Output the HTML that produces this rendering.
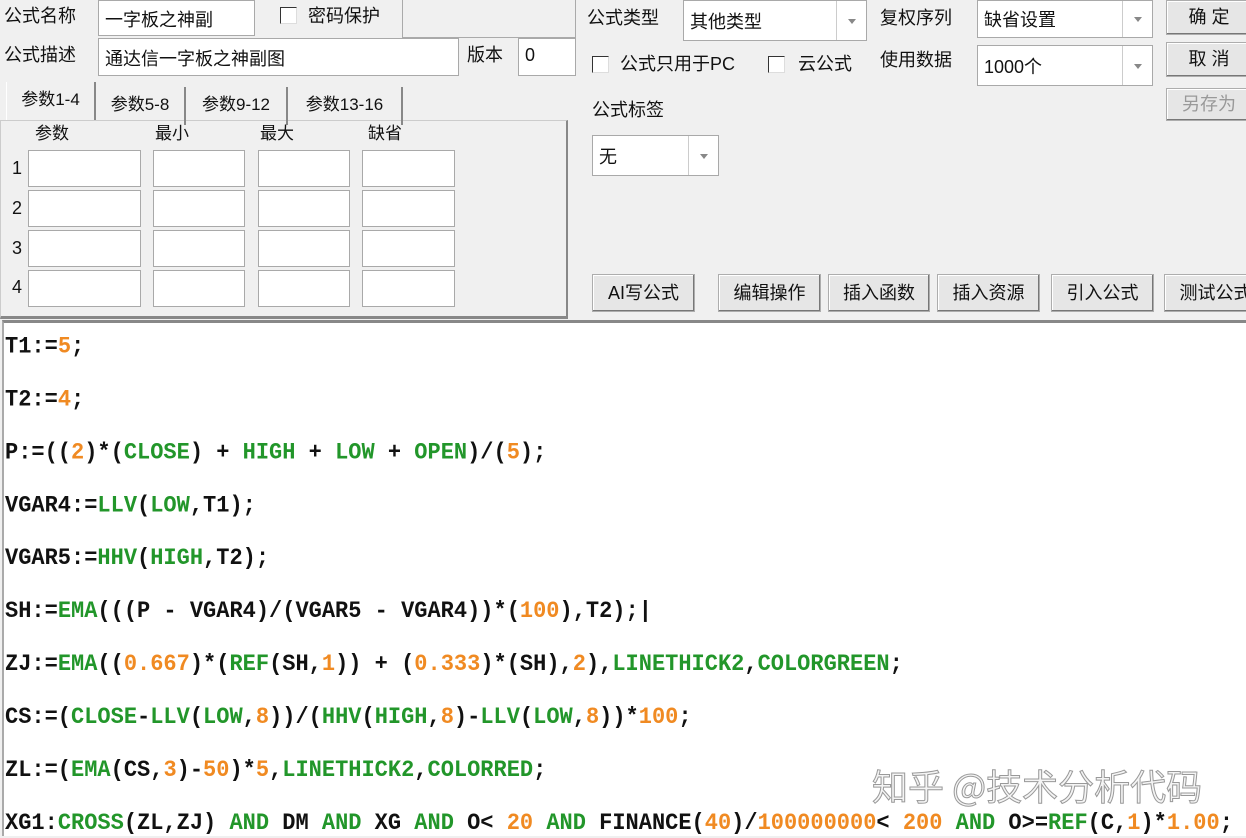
<!DOCTYPE html>
<html><head><meta charset="utf-8"><style>
*{margin:0;padding:0;box-sizing:border-box}
body{width:1246px;height:836px;overflow:hidden;background:#f0f0f0;position:relative;font-family:"Liberation Sans","Noto Sans CJK SC",sans-serif;font-size:18px;color:#111}
.a{position:absolute;white-space:nowrap}
.in{position:absolute;background:#fff;border:1px solid #a9a9a9}
.lb{position:absolute;white-space:nowrap;line-height:22px}
.cb{position:absolute;width:17px;height:17px;border:1px solid #333;border-right-color:#ddd;border-bottom-color:#ddd;background:#fff}
.dd{position:absolute;background:#fff;border:1px solid #a9a9a9}
.dd .ar{position:absolute;right:0;top:0;bottom:0;width:30px;border-left:1px solid #ccc;background:#fff}
.dd .ar:after{content:"";position:absolute;left:11px;top:50%;margin-top:-2px;border-left:4px solid transparent;border-right:4px solid transparent;border-top:5px solid #888}
.dd span{position:absolute;left:6px;top:50%;transform:translateY(-50%)}
.bt{position:absolute;background:#e6e6e6;border:1px solid #adadad;box-shadow:inset -1px -1px 0 #777,inset 1px 1px 0 #fff;text-align:center;font-size:18px}
.tab{position:absolute;top:84px;height:38px;border-right:2px solid #888;text-align:center;line-height:36px;font-size:17px}
#code{position:absolute;left:2px;top:320px;width:1244px;height:516px;background:#fff;border-top:3px solid #888;border-left:2px solid #aaa}
.l{position:absolute;left:1px;font-family:"Liberation Mono",monospace;font-weight:bold;font-size:22px;line-height:26px;white-space:pre;color:#111;transform:scaleY(1.05)}
.g{color:#22962a}.o{color:#f08a22}
</style></head><body>
<div class="lb" style="left:4px;top:5px">公式名称</div>
<div class="in" style="left:98px;top:0;width:157px;height:36px"><span class="a" style="left:6px;top:5px">一字板之神副</span></div>
<div class="cb" style="left:280px;top:7px"></div>
<div class="lb" style="left:308px;top:5px">密码保护</div>
<div style="position:absolute;left:402px;top:-2px;width:174px;height:40px;border:1px solid #aaa;border-top:none"></div>
<div class="lb" style="left:4px;top:44px">公式描述</div>
<div class="in" style="left:98px;top:38px;width:361px;height:38px"><span class="a" style="left:6px;top:6px">通达信一字板之神副图</span></div>
<div class="lb" style="left:467px;top:44px">版本</div>
<div class="in" style="left:518px;top:38px;width:58px;height:38px"><span class="a" style="left:6px;top:6px">0</span></div>

<div style="position:absolute;left:0;top:120px;width:568px;height:199px;border:1px solid #ccc;border-right:2px solid #888;border-bottom:3px solid #888"></div>
<div class="tab" style="left:6px;width:90px;top:82px;background:#f0f0f0;border-left:1px solid #fff">参数1-4</div>
<div class="tab" style="left:96px;width:90px;top:87px">参数5-8</div>
<div class="tab" style="left:186px;width:102px;top:87px">参数9-12</div>
<div class="tab" style="left:288px;width:115px;top:87px">参数13-16</div>
<div class="lb" style="left:35px;top:123px;font-size:17px">参数</div>
<div class="lb" style="left:155px;top:123px;font-size:17px">最小</div>
<div class="lb" style="left:260px;top:123px;font-size:17px">最大</div>
<div class="lb" style="left:368px;top:123px;font-size:17px">缺省</div>
<div class="lb" style="left:12px;top:157px">1</div>
<div class="lb" style="left:12px;top:197px">2</div>
<div class="lb" style="left:12px;top:237px">3</div>
<div class="lb" style="left:12px;top:276px">4</div>
<div class="in" style="left:28px;top:150px;width:113px;height:37px"></div><div class="in" style="left:153px;top:150px;width:92px;height:37px"></div><div class="in" style="left:258px;top:150px;width:92px;height:37px"></div><div class="in" style="left:362px;top:150px;width:93px;height:37px"></div>
<div class="in" style="left:28px;top:190px;width:113px;height:37px"></div><div class="in" style="left:153px;top:190px;width:92px;height:37px"></div><div class="in" style="left:258px;top:190px;width:92px;height:37px"></div><div class="in" style="left:362px;top:190px;width:93px;height:37px"></div>
<div class="in" style="left:28px;top:230px;width:113px;height:37px"></div><div class="in" style="left:153px;top:230px;width:92px;height:37px"></div><div class="in" style="left:258px;top:230px;width:92px;height:37px"></div><div class="in" style="left:362px;top:230px;width:93px;height:37px"></div>
<div class="in" style="left:28px;top:270px;width:113px;height:37px"></div><div class="in" style="left:153px;top:270px;width:92px;height:37px"></div><div class="in" style="left:258px;top:270px;width:92px;height:37px"></div><div class="in" style="left:362px;top:270px;width:93px;height:37px"></div>

<div class="lb" style="left:587px;top:7px">公式类型</div>
<div class="dd" style="left:683px;top:0;width:184px;height:41px"><span>其他类型</span><div class="ar"></div></div>
<div class="lb" style="left:880px;top:7px">复权序列</div>
<div class="dd" style="left:977px;top:0;width:176px;height:38px"><span>缺省设置</span><div class="ar"></div></div>
<div class="bt" style="left:1166px;top:0;width:86px;height:35px;line-height:33px">确 定</div>
<div class="bt" style="left:1166px;top:42px;width:86px;height:35px;line-height:33px">取 消</div>
<div class="bt" style="left:1166px;top:88px;width:86px;height:33px;line-height:31px;color:#999">另存为</div>
<div class="cb" style="left:592px;top:56px"></div>
<div class="lb" style="left:620px;top:53px">公式只用于PC</div>
<div class="cb" style="left:768px;top:56px"></div>
<div class="lb" style="left:798px;top:53px">云公式</div>
<div class="lb" style="left:880px;top:49px">使用数据</div>
<div class="dd" style="left:977px;top:45px;width:176px;height:41px"><span>1000个</span><div class="ar"></div></div>
<div class="lb" style="left:592px;top:99px">公式标签</div>
<div class="dd" style="left:592px;top:135px;width:127px;height:41px"><span>无</span><div class="ar"></div></div>
<div class="bt" style="left:592px;top:274px;width:103px;height:38px;line-height:36px">AI写公式</div>
<div class="bt" style="left:718px;top:274px;width:103px;height:38px;line-height:36px">编辑操作</div>
<div class="bt" style="left:828px;top:274px;width:102px;height:38px;line-height:36px">插入函数</div>
<div class="bt" style="left:937px;top:274px;width:103px;height:38px;line-height:36px">插入资源</div>
<div class="bt" style="left:1051px;top:274px;width:103px;height:38px;line-height:36px">引入公式</div>
<div class="bt" style="left:1164px;top:274px;width:103px;height:38px;line-height:36px">测试公式</div>

<div id="code">
<div class="l" style="top:11px">T1:=<span class="o">5</span>;</div>
<div class="l" style="top:64px">T2:=<span class="o">4</span>;</div>
<div class="l" style="top:117px">P:=((<span class="o">2</span>)*(<span class="g">CLOSE</span>) + <span class="g">HIGH</span> + <span class="g">LOW</span> + <span class="g">OPEN</span>)/(<span class="o">5</span>);</div>
<div class="l" style="top:170px">VGAR4:=<span class="g">LLV</span>(<span class="g">LOW</span>,T1);</div>
<div class="l" style="top:223px">VGAR5:=<span class="g">HHV</span>(<span class="g">HIGH</span>,T2);</div>
<div class="l" style="top:276px">SH:=<span class="g">EMA</span>(((P - VGAR4)/(VGAR5 - VGAR4))*(<span class="o">100</span>),T2);|</div>
<div class="l" style="top:329px">ZJ:=<span class="g">EMA</span>((<span class="o">0.667</span>)*(<span class="g">REF</span>(SH,<span class="o">1</span>)) + (<span class="o">0.333</span>)*(SH),<span class="o">2</span>),<span class="g">LINETHICK2</span>,<span class="g">COLORGREEN</span>;</div>
<div class="l" style="top:382px">CS:=(<span class="g">CLOSE</span>-<span class="g">LLV</span>(<span class="g">LOW</span>,<span class="o">8</span>))/(<span class="g">HHV</span>(<span class="g">HIGH</span>,<span class="o">8</span>)-<span class="g">LLV</span>(<span class="g">LOW</span>,<span class="o">8</span>))*<span class="o">100</span>;</div>
<div class="l" style="top:435px">ZL:=(<span class="g">EMA</span>(CS,<span class="o">3</span>)-<span class="o">50</span>)*<span class="o">5</span>,<span class="g">LINETHICK2</span>,<span class="g">COLORRED</span>;</div>
<div class="l" style="top:488px">XG1:<span class="g">CROSS</span>(ZL,ZJ) <span class="g">AND</span> DM <span class="g">AND</span> XG <span class="g">AND</span> O&lt; <span class="o">20</span> <span class="g">AND</span> FINANCE(<span class="o">40</span>)/<span class="o">100000000</span>&lt; <span class="o">200</span> <span class="g">AND</span> O&gt;=<span class="g">REF</span>(C,<span class="o">1</span>)*<span class="o">1.00</span>;</div>
</div>
<div class="a" style="left:872px;top:763px;font-size:36px;color:#f4f4f4;-webkit-text-stroke:1px #999;font-family:'Noto Sans CJK SC',sans-serif;line-height:44px">知乎 @技术分析代码</div>
</body></html>
